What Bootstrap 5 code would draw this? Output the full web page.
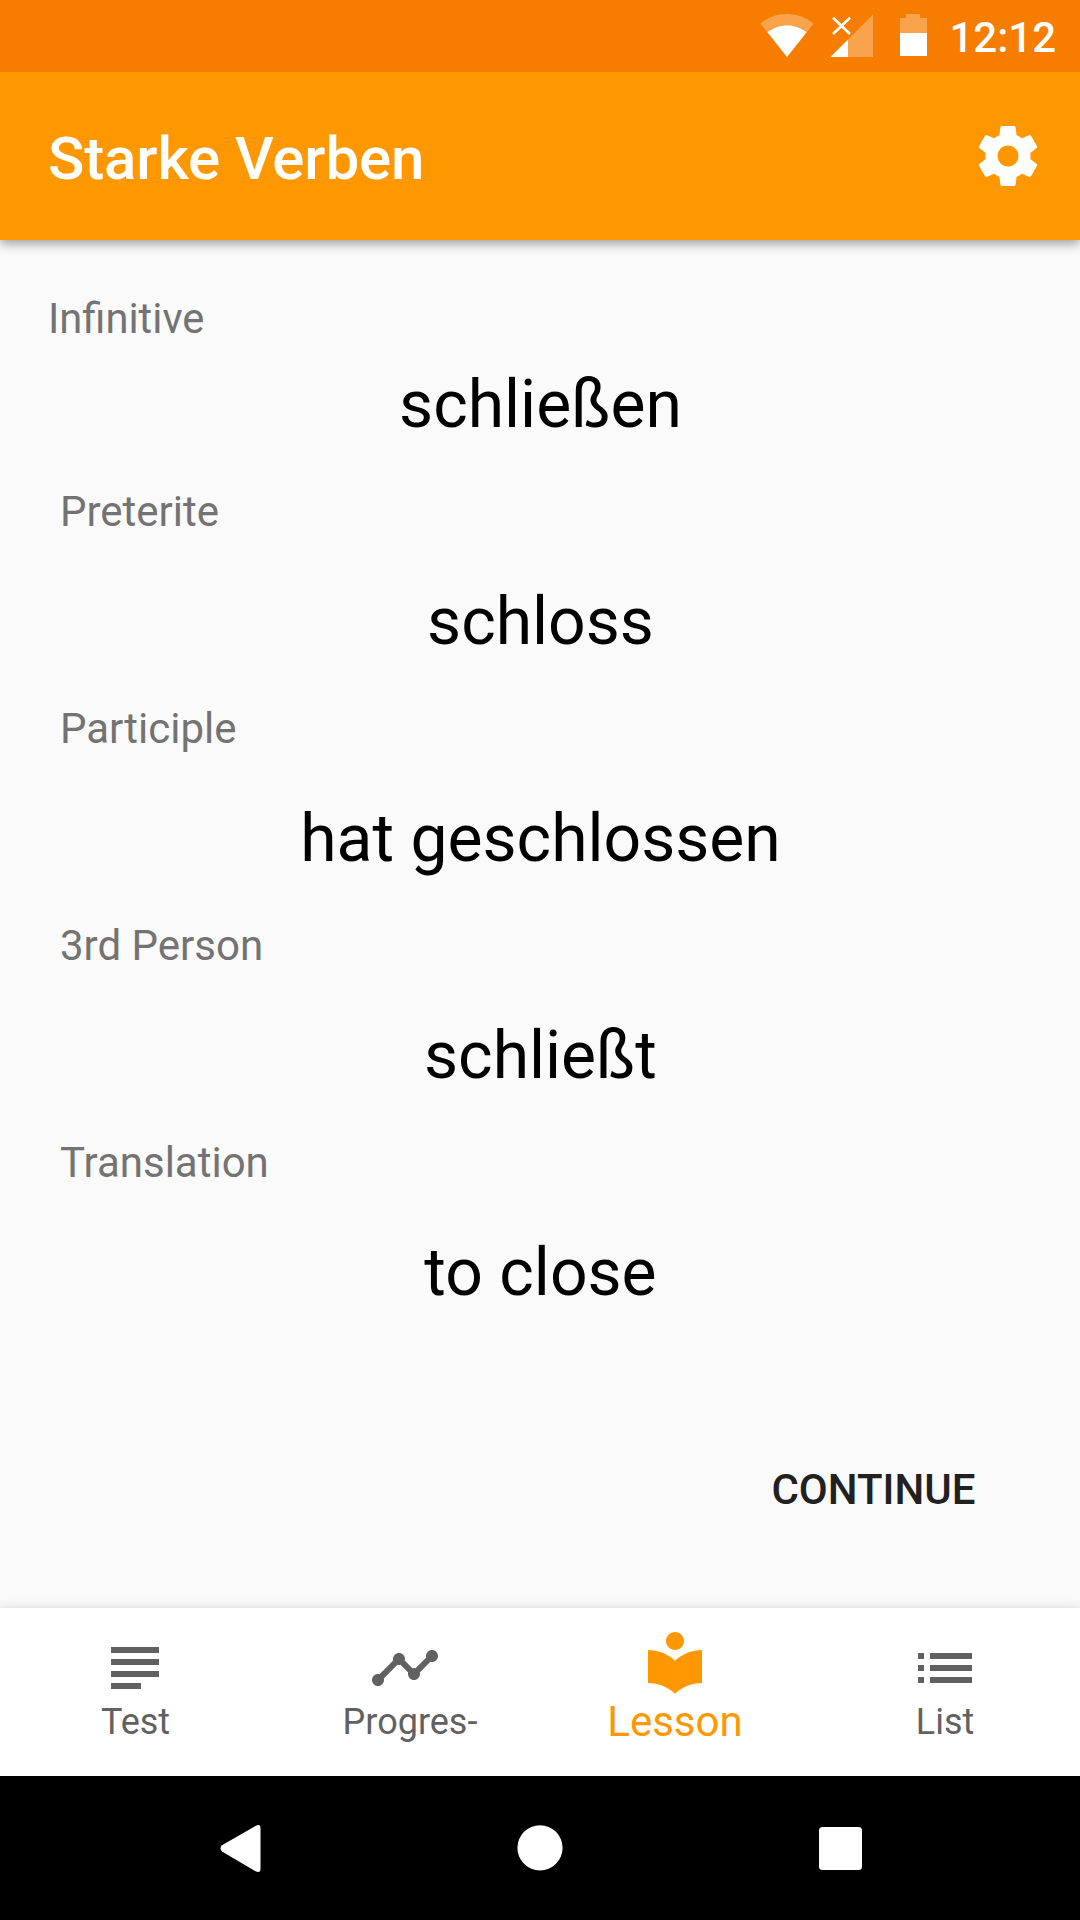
<!DOCTYPE html>
<html lang="de">
<head>
<meta charset="utf-8">
<meta name="viewport" content="width=device-width, initial-scale=1">
<title>Starke Verben</title>
<link href="https://cdn.jsdelivr.net/npm/bootstrap@5.3.0/dist/css/bootstrap.min.css" rel="stylesheet">
<style>
  body { font-family: Roboto, "Liberation Sans", sans-serif; background: #fafafa; width: 1080px; height: 1920px; overflow: hidden; color: #000; }
  svg { display: block; flex: none; }
  .status-bar { height: 72px; background: #f77d00; padding-right: 24px; z-index: 2; }
  .clock { font-size: 42px; font-weight: 500; line-height: 48px; margin: 3px 0 0 21px; }
  .app-bar { height: 168px; background: #ff9800; padding: 0 36px 0 48px; box-shadow: 0 4px 10px rgba(0,0,0,.36); z-index: 1; }
  .app-title { font-size: 60px; font-weight: 500; line-height: 72px; margin-top: 5px; letter-spacing: -.1px; }
  .verb-form { height: 217px; padding: 0 60px; }
  .verb-form dt { font-size: 42px; font-weight: 400; line-height: 50px; color: #737373; }
  .verb-form dd { font-size: 66px; line-height: 78px; margin: 46px 0 0 1px; }
  .verb-form.infinitive { height: 193px; padding: 0 48px; }
  .infinitive dt { font-size: 41.7px; }
  .infinitive dd { margin-top: 22px; }
  .lesson { padding-top: 54px; }
  .continue-btn { font-size: 42px; font-weight: 500; line-height: 50px; color: #212121; padding: 0; border: 0; margin: 0 104.5px 93px 0; }
  .tab-bar { height: 168px; background: #fff; box-shadow: 0 0 10px rgba(0,0,0,.14); color: #616161; }
  .tab-item { color: inherit; font-size: 36px; line-height: 36px; padding-top: 24px; }
  .tab-item.active { color: #ff9800; font-size: 42px; line-height: 48px; padding-top: 18px; }
  .tab-label { padding-left: 1px; }
  .active .tab-label { padding-left: 0; }
  .tab-label-cut { padding-left: 10px; }
  .system-nav { height: 144px; background: #000; }
</style>
<script src="https://cdn.jsdelivr.net/npm/bootstrap@5.3.0/dist/js/bootstrap.bundle.min.js"></script>
</head>
<body class="d-flex flex-column">
<div class="status-bar d-flex align-items-center justify-content-end text-white position-relative">
  <svg width="168" height="72" viewBox="0 0 168 72" fill="#fff">
    <path opacity=".3" d="M0.500 23.700C7.500 17.500 16.500 14 27 14s19 3.500 26.500 9.700L27 57z"/>
    <path d="M7.500 32.300C13 28 19.500 25.500 27 25.500s14 2.500 19.500 6.800L27 57z"/>
    <path opacity=".3" d="M113 14.500V57H70.500z"/>
    <path d="M88 39.500V57H70.500z"/>
    <path d="M73 17.700 90 34M90 17.700 73 34" stroke="#fff" stroke-width="2.600"/>
    <path opacity=".3" d="M146 14h14v4h7v15h-27V18h6z"/>
    <path d="M140 33h27v23h-27z"/>
  </svg>
  <span class="clock">12:12</span>
</div>
<header class="app-bar d-flex align-items-center justify-content-between text-white position-relative">
  <h1 class="app-title mb-0">Starke Verben</h1>
  <svg width="72" height="72" viewBox="0 0 24 24" fill="#fff" role="img" aria-label="Settings"><path d="M19.430 12.980c.04-.32.07-.64.07-.98s-.03-.66-.07-.98l2.110-1.650c.19-.15.24-.42.12-.64l-2-3.460c-.12-.22-.39-.3-.61-.22l-2.490 1c-.52-.4-1.080-.73-1.690-.98l-.38-2.650C14.460 2.180 14.250 2 14 2h-4c-.25 0-.46.18-.49.42l-.38 2.650c-.61.25-1.170.59-1.690.98l-2.490-1c-.23-.09-.49 0-.61.22l-2 3.460c-.13.22-.07.49.12.64l2.110 1.650c-.04.32-.07.65-.07.98s.03.66.07.98l-2.110 1.650c-.19.15-.24.42-.12.64l2 3.460c.12.22.39.3.61.22l2.490-1c.52.4 1.080.73 1.690.98l.38 2.650c.03.24.24.42.49.42h4c.25 0 .46-.18.49-.42l.38-2.650c.61-.25 1.170-.59 1.690-.98l2.490 1c.23.09.49 0 .61-.22l2-3.460c.12-.22.07-.49-.12-.64l-2.110-1.650zM12 15.500c-1.930 0-3.500-1.570-3.500-3.500s1.570-3.500 3.500-3.500 3.500 1.570 3.500 3.500-1.570 3.500-3.500 3.500z"/></svg>
</header>
<main class="lesson flex-grow-1 d-flex flex-column">
  <dl class="verb-form infinitive mb-0"><dt>Infinitive</dt><dd class="text-center">schließen</dd></dl>
  <dl class="verb-form mb-0"><dt>Preterite</dt><dd class="text-center">schloss</dd></dl>
  <dl class="verb-form mb-0"><dt>Participle</dt><dd class="text-center">hat geschlossen</dd></dl>
  <dl class="verb-form mb-0"><dt>3rd Person</dt><dd class="text-center">schließt</dd></dl>
  <dl class="verb-form mb-0"><dt>Translation</dt><dd class="text-center">to close</dd></dl>
  <button type="button" class="btn continue-btn align-self-end mt-auto">CONTINUE</button>
</main>
<nav class="tab-bar nav nav-justified flex-nowrap">
  <a class="tab-item col d-flex flex-column align-items-center text-decoration-none" href="#">
    <svg width="72" height="72" viewBox="0 0 24 24" fill="currentColor"><path d="M14 17H4v2h10v-2zm6-8H4v2h16V9zM4 15h16v-2H4v2zM4 5v2h16V5H4z"/></svg>
    <span class="tab-label">Test</span></a>
  <a class="tab-item col d-flex flex-column align-items-center text-decoration-none" href="#">
    <svg width="72" height="72" viewBox="0 0 24 24" fill="currentColor"><path d="M23 8c0 1.100-.9 2-2 2-.18 0-.35-.02-.51-.07l-3.560 3.550c.05.16.07.34.07.52 0 1.100-.9 2-2 2s-2-.9-2-2c0-.18.02-.36.07-.52l-2.550-2.550c-.16.05-.34.07-.52.07s-.36-.02-.52-.07l-4.550 4.560c.05.16.07.33.07.51 0 1.100-.9 2-2 2s-2-.9-2-2 .9-2 2-2c.18 0 .35.02.51.07l4.560-4.550C8.020 9.360 8 9.180 8 9c0-1.100.9-2 2-2s2 .9 2 2c0 .18-.02.36-.07.52l2.550 2.550c.16-.05.34-.07.52-.07s.36.02.52.07l3.550-3.560C19.020 8.350 19 8.180 19 8c0-1.100.9-2 2-2s2 .9 2 2z"/></svg>
    <span class="tab-label-cut">Progres-</span></a>
  <a class="tab-item active col d-flex flex-column align-items-center text-decoration-none" href="#">
    <svg width="72" height="72" viewBox="0 0 24 24" fill="currentColor"><path d="M12 11.550C9.640 9.350 6.480 8 3 8v11c3.480 0 6.640 1.350 9 3.550 2.360-2.190 5.520-3.550 9-3.550V8c-3.480 0-6.640 1.350-9 3.550zM12 8c1.660 0 3-1.340 3-3s-1.340-3-3-3-3 1.340-3 3 1.340 3 3 3z"/></svg>
    <span class="tab-label">Lesson</span></a>
  <a class="tab-item col d-flex flex-column align-items-center text-decoration-none" href="#">
    <svg width="72" height="72" viewBox="0 0 24 24" fill="currentColor"><path d="M3 13h2v-2H3v2zm0 4h2v-2H3v2zm0-8h2V7H3v2zm4 4h14v-2H7v2zm0 4h14v-2H7v2zM7 7v2h14V7H7z"/></svg>
    <span>List</span></a>
</nav>
<footer class="system-nav d-flex justify-content-center">
  <svg width="300" height="144" viewBox="0 0 300 144" fill="#fff"><path d="M132 69.300 165.500 49.900Q170.500 47.500 170.500 52V93Q170.500 97.500 165.500 95.300L132 75.500Q129 72.400 132 69.300z"/></svg>
  <svg width="300" height="144" viewBox="0 0 300 144" fill="#fff"><circle cx="150" cy="71.800" r="22.600"/></svg>
  <svg width="300" height="144" viewBox="0 0 300 144" fill="#fff"><rect x="129" y="51" width="43" height="43" rx="3.500"/></svg>
</footer>
</body>
</html>
